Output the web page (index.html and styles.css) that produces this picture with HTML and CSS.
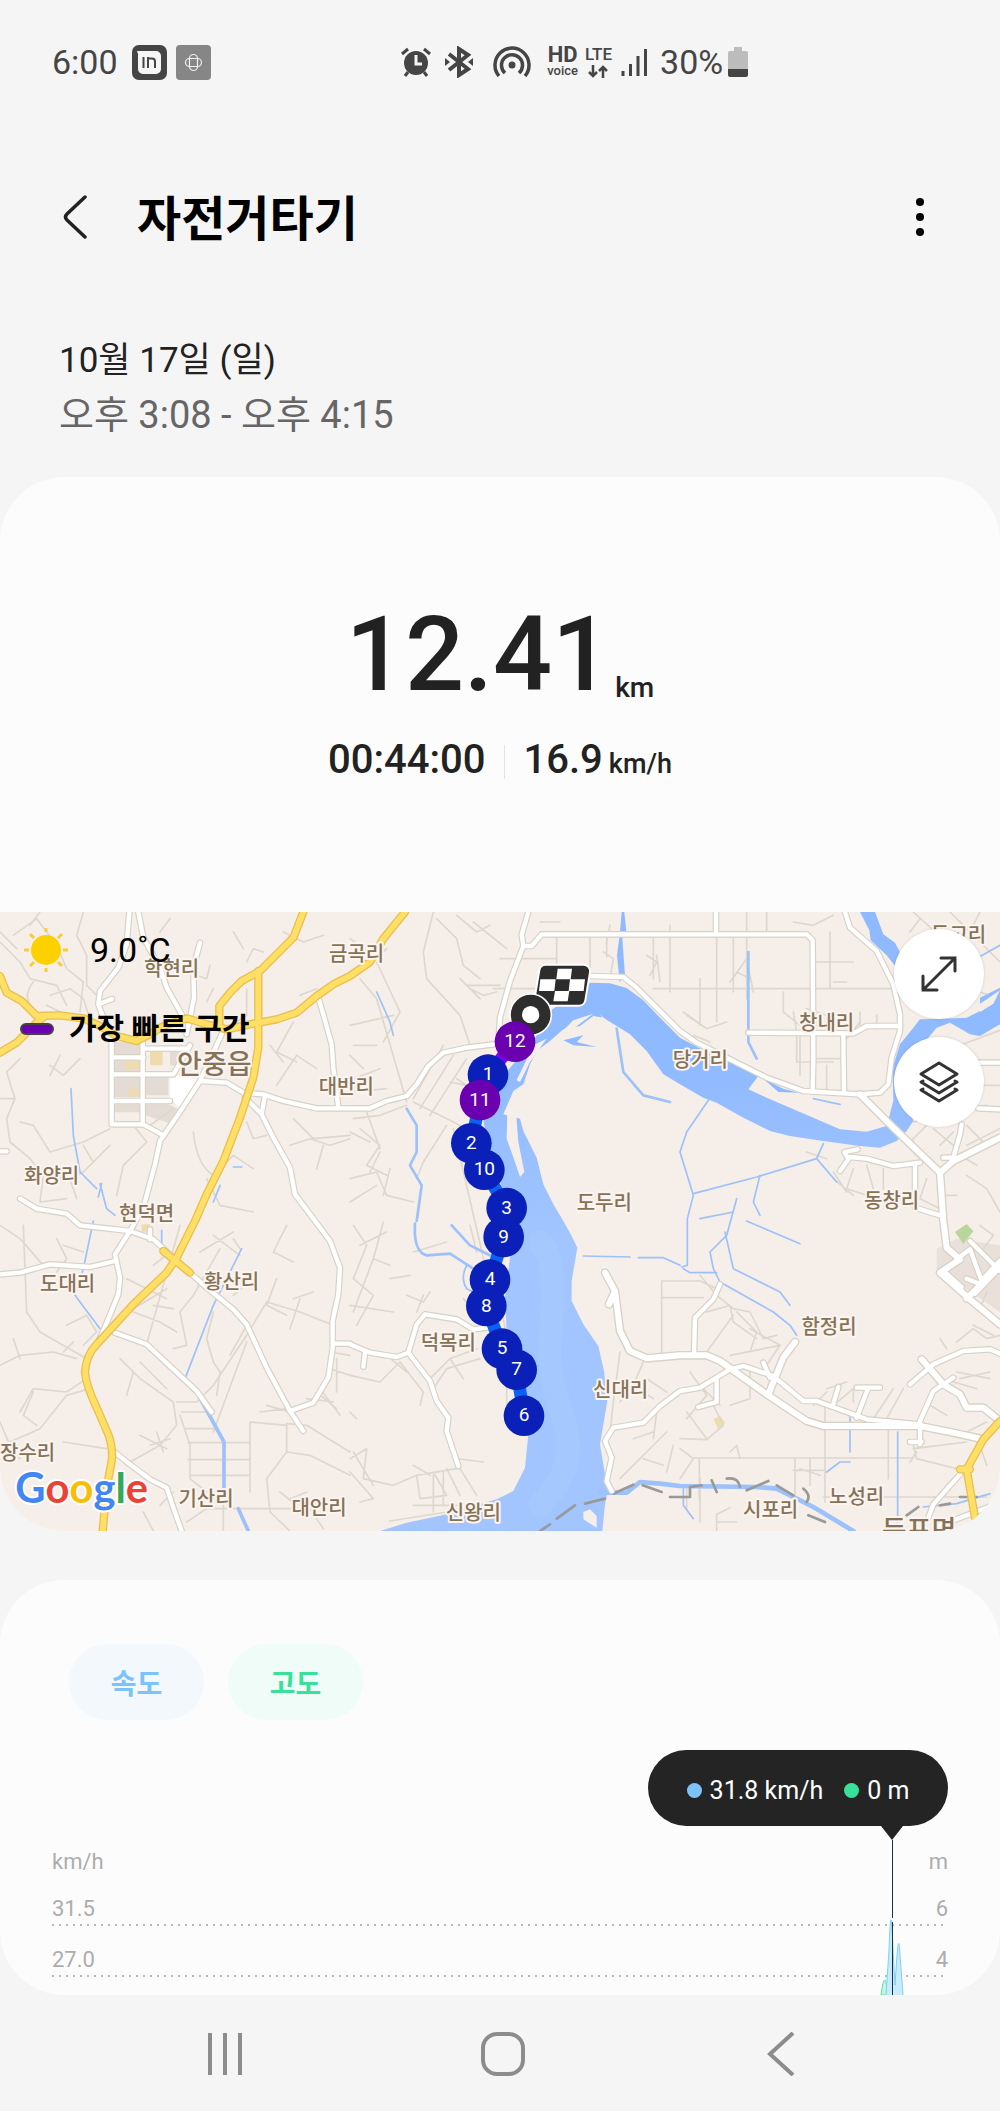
FILE: index.html
```
<!DOCTYPE html>
<html lang="ko">
<head>
  <meta charset="UTF-8"/>
  <meta name="viewport" content="width=device-width, initial-scale=1.0"/>
  <title>자전거타기</title>
  <link rel="stylesheet" href="styles.css">
</head>
<body>

  <!-- Status bar -->
  <div class="status-bar">
    <div class="status-left">
      <span>6:00</span>
      <svg width="35" height="35" viewBox="0 0 35 35">
        <rect width="35" height="35" rx="7" fill="#454545"/>
        <path d="M5 6h19a5 5 0 0 1 5 5v13a5 5 0 0 1-5 5H11a5 5 0 0 1-5-5V9z" fill="#f5f5f5"/>
        <path d="M11.500 12v11M16 23V12M16 13.500h4q3 0 3 3V23" fill="none" stroke="#454545" stroke-width="2"/>
      </svg>
      <svg width="35" height="35" viewBox="0 0 35 35">
        <rect width="35" height="35" rx="4" fill="#868686"/>
        <g fill="none" stroke="#f0f0f0" stroke-width="1.200">
          <rect x="13.500" y="9.500" width="8" height="16" rx="4"/>
          <rect x="9.500" y="13.500" width="16" height="8" rx="4"/>
        </g>
      </svg>
    </div>
    <div class="status-right">
      <!-- alarm -->
      <svg width="32" height="32" viewBox="0 0 32 32">
        <circle cx="16" cy="17" r="12" fill="#454545"/>
        <path d="M2 8l6-5M30 8l-6-5M8 26l-3 4M24 26l3 4" stroke="#454545" stroke-width="3"/>
        <path d="M16 9v9h6" fill="none" stroke="#f5f5f5" stroke-width="3"/>
      </svg>
      <!-- bluetooth -->
      <svg class="bluetooth" width="28" height="32" viewBox="0 0 28 32">
        <path d="M4 8l19 15-9 6V3l9 6L4 24" fill="none" stroke="#454545" stroke-width="4"/>
        <path d="M0 12l5 4-5 4zM28 12l-5 4 5 4z" fill="#454545"/>
      </svg>
      <!-- hotspot -->
      <svg class="hotspot" width="38" height="32" viewBox="0 0 38 32">
        <circle cx="19" cy="19" r="3.500" fill="#454545"/>
        <path d="M6 30a17 17 0 1 1 26 0M12 27a10.500 10.500 0 1 1 14 0" fill="none" stroke="#454545" stroke-width="3.500"/>
      </svg>
      <div class="stacked"><b>HD</b><small>voice</small></div>
      <div class="stacked lte">
        <b>LTE</b>
        <svg width="20" height="13" viewBox="0 0 20 13">
          <path d="M5 0v11M1 7l4 4 4-4M15 13V2M11 6l4-4 4 4" fill="none" stroke="#454545" stroke-width="2.500"/>
        </svg>
      </div>
      <svg width="27" height="28" viewBox="0 0 27 28">
        <path d="M2 23v5M9.500 16v12M17 8v20M24.500 1v27" stroke="#454545" stroke-width="3"/>
      </svg>
      <span class="percent">30%</span>
      <svg width="20" height="30" viewBox="0 0 20 30">
        <path d="M6 0h8v4h4a2 2 0 0 1 2 2v16H0V6a2 2 0 0 1 2-2h4z" fill="#bcbcbc"/>
        <path d="M0 22h20v6a2 2 0 0 1-2 2H2a2 2 0 0 1-2-2z" fill="#454545"/>
      </svg>
    </div>
  </div>

  <header class="app-header">
    <button class="icon-btn" aria-label="뒤로">
      <svg width="26" height="46" viewBox="0 0 26 46">
        <path d="M23 3L5 20q-3 3 0 6l18 17" fill="none" stroke="#222" stroke-width="3.500" stroke-linecap="round"/>
      </svg>
    </button>
    <h1>자전거타기</h1>
    <button class="icon-btn more" aria-label="더보기">
      <svg width="8" height="40" viewBox="0 0 8 40">
        <circle cx="4" cy="5" r="4"/><circle cx="4" cy="20" r="4"/><circle cx="4" cy="35" r="4"/>
      </svg>
    </button>
  </header>

  <div class="date">
    <div class="day">10월 17일 (일)</div>
    <div class="time">오후 3:08 - 오후 4:15</div>
  </div>

  <!-- Workout summary + map -->
  <section class="card">
    <div class="summary">
      <div class="distance">12.41<span class="unit">km</span></div>
      <div class="stats">
        <span>00:44:00</span>
        <span class="speed">16.9<span class="unit">km/h</span></span>
      </div>
    </div>

    <div class="map">
      <svg class="map-svg" viewBox="0 0 3000 1857" preserveAspectRatio="xMidYMid slice">
        <defs>
          <linearGradient id="river" gradientUnits="userSpaceOnUse" x1="0" y1="450" x2="0" y2="1000">
            <stop offset="0" stop-color="#90baff"/>
            <stop offset="1" stop-color="#a2c5ff"/>
          </linearGradient>
          <g id="white-roads">
            <path d="M388 0L380 97L355 167L300 237L295 277L310 317M300 275l36-14"/>
            <path d="M415 0L430 77L480 167L500 227L545 307"/>
            <path d="M600 92L580 167L582 257L560 367"/>
            <path d="M600 507L680 512L730 542L790 547L850 567L950 589L1110 589L1160 567L1220 552L1250 517L1285 462L1330 422L1400 407L1480 397"/>
            <path d="M735 557L785 607L820 677L870 767L885 847L940 920L990 987L1020 1067L1015 1147L998 1227L998 1307L985 1397L940 1472L870 1497M785 607l10-58"/>
            <path d="M955 257L970 307L995 397L1000 467L1015 587"/>
            <path d="M665 367L600 507L545 592L480 687L465 757L430 887L390 957L345 1027L360 1097L355 1147L310 1257L295 1290"/>
            <path d="M0 1087L60 1082L150 1057L270 1065L345 1047"/>
            <path d="M60 860L110 890L200 905L240 940L300 947L390 957L460 982L520 1037L620 1127L700 1192L740 1237L800 1367L870 1497L910 1557"/>
            <path d="M345 1262L440 1297L590 1437L635 1500M340 1617L390 1657L450 1702L500 1727L520 1787L545 1857"/>
            <path d="M0 718h20M335 390V637H430L490 670M428 380V637M340 436H430M340 487H520M335 567H510M430 410H560M570 400L520 487M450 982v-30"/>
            <path d="M1585 0L1565 67L1570 102L1530 207L1500 317L1495 397"/>
            <path d="M1570 102L1595 102L1625 67H2420L2438 85L2440 437L2438 537M2148 0V62"/>
            <path d="M1770 192L1870 195L1910 227L2040 357L2090 392L2190 442L2300 497L2410 537L2580 547L2640 542L2665 517L2675 437L2700 357L2700 307L2680 217L2630 117L2550 47L2535 0"/>
            <path d="M2245 362L2560 364L2600 342L2700 342M2530 367L2532 537M2940 452H3000M2935 589L3000 592"/>
            <path d="M2520 777L2550 735L2600 740L2680 762L2760 752M2545 740l-12-20 40-8M2745 757V887L2820 910M2885 637L2880 667L2860 737H2830"/>
            <path d="M1050 1297L1110 1322L1190 1335L1225 1322L1250 1237L1275 1207L1370 1222L1420 1252L1460 1247M1225 1322L1290 1407L1310 1467L1345 1517L1340 1557L1375 1662M1095 1322l-5 42M998 1295h52"/>
            <path d="M2040 1437L1980 1482L1930 1532L1840 1547L1815 1587L1835 1637L1820 1707L1835 1737M2040 1437L2100 1427L2190 1372L2230 1362L2320 1392L2410 1467L2450 1467L2600 1522L2760 1537"/>
            <path d="M2160 1117L2140 1162L2085 1217L2082 1327M2290 1352l20 45M2150 1400v70l-55 15"/>
            <path d="M2730 1417L2800 1357L2890 1317L2970 1312L3000 1325M2860 1397L2800 1437L2760 1527L2760 1597M2730 1590h35M2640 1427H2570M2605 1427L2570 1517M2515 1425l-15 50"/>
            <path d="M2785 1817L2800 1777L2880 1687M2820 1840L3000 1772"/>
            <path d="M2910 987L3000 1077M2950 1100L3000 1045M2925 1145L3000 1067M2870 1042L2910 1012L2950 1120L2900 1100M2840 1085l45 40"/>
          </g>
          <g id="main-roads">
            <path d="M2580 547L2680 647L2820 782L2830 927L2840 1007L2880 1042M2820 782L2860 747L3000 677"/>
            <path d="M2880 1042L2820 1082L2910 1162L3000 1237M2900 1160L3000 1060"/>
            <path d="M1815 1082L1845 1137L1860 1257L1890 1317L1940 1339L2040 1330L2120 1330L2160 1347L2300 1447L2420 1527L2470 1542L2760 1542L2860 1562L2950 1582M1845 1137l-18 40"/>
            <path d="M2385 1290L2350 1337L2305 1447M2765 1342L2830 1417L2880 1447L2900 1487L2950 1487L3000 1527"/>
          </g>
          <g id="yellow-roads">
            <path d="M0 192L20 242L65 267L110 312L180 310L250 319L300 342L350 372L410 387L450 367L490 342L560 319L620 337L680 352L760 335L830 322L890 302L950 252L1000 217L1050 192L1110 150L1150 80L1215 0"/>
            <path d="M0 422L50 392L110 332L135 312"/>
            <path d="M910 0L880 77L830 127L780 177L725 207L690 242L658 282L658 337"/>
            <path d="M775 177V407L760 497L720 617L670 747L620 847L585 927L530 1037L500 1082L400 1177L290 1297Q258 1330 255 1380Q258 1420 290 1487L325 1567Q340 1610 335 1647L320 1727L308 1857"/>
            <path d="M490 1017L570 1082M3000 1527L2950 1582L2900 1672L2925 1817M2880 1672h30"/>
          </g>
        </defs>

        <rect width="3000" height="1857" fill="#f6eee8"/>

        <!-- built-up areas -->
        <path d="M345 390h75v40h-75zM345 445h75v35h-75zM345 495h75v60h-75zM437 495h68v55h-68zM437 570l55 0 50 25-30 40-75-25zM345 573h75v28h-75zM510 410l50-10-20 60h-30z" fill="#e4dcd4"/>
        <path d="M450 415h38v45h-38zM375 450h45v22h-45zM385 530h35v22h-35zM425 937h25v22h-25zM2140 1520l20-8 15 20-20 20z" fill="#efdcae"/>
        <path d="M510 487L600 505L545 592L510 560z" fill="#fff"/>
        <path d="M2810 1010l60-30 130 20v200l-190-130z" fill="#e9e0d9"/>
        <path d="M2865 960l35-24 20 22-30 38z" fill="#b8d59a"/>

        <!-- lanes -->
        <g class="lanes">
          <path d="M40 70L110 20L170 100L200 170L250 210L240 300M0 90L60 150L90 200L170 220L200 280M100 210Q60 260 110 300M150 250L210 230L250 260L270 320M140 280l60 30M250 0l-20 70 30 60v90l40 40M120 0l-30 40M0 60L50 110"/>
          <path d="M60 440L20 480L45 560L20 620L30 690L90 740L130 790L210 800L250 780L330 700M240 440L190 490L150 460M180 430l-30 60M330 650L250 690L150 720L100 640L60 630M130 790L120 870L200 860M400 640L440 690L370 760L350 850M210 800l20 60M0 560l45 0M250 700l30 50"/>
          <path d="M450 640L520 590M580 660Q590 760 640 790L700 730L760 770M620 800L660 880L760 900M740 150l20-40 30 10M740 230v80l-60 40M880 330l-50 90 60 30M810 400l40 50M830 520l60-90 60 40M900 250l50-20M850 60l60 30 60-20M700 60l30 50M880 620l60 60 110-10M870 700l60-20 60 20 60-20M970 700l-20 70M740 630l20 50 40-10M560 180l60 20 10-40M640 230l-20 40M480 60l30-40"/>
          <path d="M0 940L60 980L130 1060M70 940L80 1200L120 1260L260 1340M170 980l30 60-30 40M190 1000l60 20M0 1360L60 1330L160 1320L230 1340M60 1340l-20-60M200 1240l60-30 30 50-40 40M60 1500L100 1430L200 1440L260 1400M0 1530L30 1600L60 1640M30 1590L120 1550L200 1450M190 1590l130 20M270 1430l-70 20M190 1320l30-30M100 1440L70 1510L110 1540"/>
          <path d="M360 1340L420 1400L520 1470L530 1540L480 1600L390 1650M400 1380L380 1450M420 1350l80 80M530 1470L590 1470L640 1420L740 1270L800 1170L900 1200L1000 1240M540 1510L570 1600V1700L620 1740M545 1500H640M555 1550H655M565 1592H750M565 1643H750M570 1690H745M750 1530V1740M750 1530L860 1540V1620L800 1700L810 1800L870 1857M860 1620L930 1630L1050 1690M860 1535L920 1540L1050 1620M420 1570l80 40M450 1600l60-20M470 1560l20 60"/>
          <path d="M660 1010L580 1150L540 1200L560 1300L520 1310M600 1020L700 960M640 970l80 60M700 980l20 30M860 940l-40 80 60 30M830 1100l-30 80 60 30M640 1200L620 1280L640 1350L660 1380L650 1450M740 1240L690 1330M740 1290L640 1560M540 940L440 1297M460 1060l50-40M380 1100l120 60M400 1200l80 30 50 30M460 1180l60 10M400 1190l100-60M700 1150l70-60M870 1250l30-90M880 1160l60-20M990 1320l60 10M990 1370l60 20M1010 1340v100M800 1480l70 20M780 1500l80-10M920 1460l80 10M950 1440l60 50"/>
          <path d="M1050 80L1130 140L1160 110M1130 150L1200 300L1150 390M1080 200L1130 260L1220 570M1050 340L1180 310M1300 0L1270 120L1280 200L1380 310L1410 400M1310 20L1370 80L1390 160L1440 200M1400 220h100M1410 230l40 20 40-10M1380 200l60 60M1420 30l100 80M1370 10l60 50 40-20M1050 430L1090 470M1060 400L1130 400M1060 500l80-30M1060 540l100-10"/>
          <path d="M1240 560L1330 400M1260 590L1360 430M1290 610L1400 440M1240 570L1420 660M1340 640L1270 750L1250 800M1360 650L1460 1080M1060 620L1140 610L1220 580M1080 650l60 50-40 60 60 30M1100 600l40 110M1050 660l60 30M1050 800L1130 780L1160 850L1240 870M1050 870l80-50M1140 720l-30 60M1370 500l30 20M1350 510l50 10M1170 770l-20 80"/>
          <path d="M1480 230h200M1500 140h170M1670 70V230M1770 75V190M1960 75V200M2010 40V240M1820 75v60M1960 230H2680M2150 70V330M2240 0V260M2440 150H2560M2490 60V230M1940 130l30 20-20 40M1970 130l10 80M2300 0v70M2380 30l60 10 60-30M2500 210h40M1810 120l30 20-10 60M1680 30h-60M1830 40l-10 50"/>
          <path d="M2200 60V240M2190 210L2240 140L2260 240M2210 180l40 20M2050 300L2120 350L2180 330M2100 200V340M2060 310l60 40M2080 370l50 20M2390 360V450L2500 450M2380 300l10 60M2420 290l60 20M2580 300v60M2630 310v40M2440 440H2530M2480 460v70M2540 380l40-50M2350 240v60l50 40M2400 370v120M2850 0L3000 150M2740 0L2850 100M2940 0l-20 40M3000 260l-60-20M2880 400L3000 355M2940 520H3000M2760 20l-30 40"/>
          <path d="M2780 640L2720 700L2760 740M2800 650L2860 700M2900 700L3000 650M2790 600L2960 580M2820 700l40-40M2900 640l60 60M2880 730l50 30M2900 790L2960 830L3000 900M2830 850h40M2780 800l-20 60 60 30M2740 630l80-20M2560 770L2540 830L2600 850M2500 800L2560 850M2480 740l-60-20M2540 840l-40-60M2600 760l20 70M2650 770v60"/>
          <path d="M2040 1107H2100L2150 1130M2040 1157H2110M1985 1107V1330M1985 1107h60M1985 1157h60M2100 1090L2150 1150L2200 1190L2250 1200L2290 1280L2330 1270M2120 1200L2190 1180L2200 1230L2270 1280M2200 1210L2120 1320M2210 1200l60 60-20 60M2250 1250l90 50-40 60M2190 1330L2340 1300M2070 1380L2120 1450L2060 1520M2100 1420l60 60M2040 1580L2120 1583L2170 1540L2140 1480M2060 1500l60 80M2040 1610l40 30-40 60M2080 1638H2740M2098 1640v120M2190 1620l20-20 10 40M2250 1360v100l-60 20"/>
          <path d="M2475 1480V1770M2385 1640V1750M2430 1640v80M2380 1675H2470M2665 1540V1700M2470 1755H2960M2740 1600l10 40 160 40M2740 1610L2900 1590M2750 1620l-20 30M2660 1520L2710 1430M2480 1430l60-20M2500 1480l60-50M2620 1520l60-90M2560 1430v40M2440 1480l40-40M2400 1670l60 20M2800 1450l-10 30 50 30M2880 1400l90-20M2870 1380l100 20M2860 1410l70 20M2900 1560l60-30M2960 1660l-20-60M2870 1290l50-40 40 30 40-10M2840 1310l-20-30M2920 1240l60 30M2940 940l40 30-30 40M2960 1140l-20 50"/>
          <path d="M1060 940L1100 1000L1060 1100L1120 1150L1070 1240M1150 930L1120 1040L1060 1200M1080 1000L1160 960M1050 1180L1180 1200M1120 1040l50 20M1220 1150l50 20 20-30M1270 1150l-20 50M1390 1160l40 40M1430 1310L1350 1340L1290 1400M1440 1340l-100 30-40 60M1350 1340l40 60M1050 1390L1140 1410L1200 1350M1200 1350l70 90-10 40M1160 1330l60 50M1050 1500l20 20"/>
          <path d="M1050 1640L1100 1610L1090 1700L1180 1720L1250 1690L1370 1670M1050 1680L1120 1760L1080 1770M1060 1620l60 100M1250 1690L1260 1760L1340 1750M1300 1680L1340 1750M1340 1670L1380 1750M1380 1670L1430 1750M1370 1640l80 10M1240 1660l50 30M1240 1780H1380M1300 1690v110M1330 1680v100M1170 1827L1340 1800M960 1430l60 80M1860 1320L1840 1470L1830 1560M1930 1350L1900 1420L1960 1460M1940 1400l60 40M1890 1430l-30 40M1970 1500L1960 1580M2000 1560L1920 1640L1860 1700M1930 1640l60 20M2020 1600l-20 80M1900 1580l60-20M2100 1830V1700M2150 1857v-50l40-20M2060 1730v60M2150 1830h60"/>
          <path d="M1520 1260v230M1510 1220l10 60M1170 1100l60-10M1240 1020L1340 990M1410 940l20 80M930 1790l40 60M700 1790H930M670 1640v217M560 1830l60-40h60M430 1800l30 57M520 1740l-40 40M870 1760l50-20M890 1780l-50-40"/>
        </g>

        <!-- water -->
        <g fill="#90baff">
          <path fill="url(#river)" d="M1770 212L1830 214L1880 228L1930 265L1975 312L2040 377L2115 417L2250 477L2275 492L2245 532L2300 557L2370 587L2440 617L2520 652L2600 659L2660 642L2680 567L2678 467L2700 397L2740 347L2760 322L2830 320L2900 317L2940 297V257L3000 227V337L2940 372L2910 367L2850 332L2810 347L2760 407L2730 447L2720 567L2740 627L2720 657L2690 687L2640 707L2580 702L2470 687L2370 672L2310 657L2230 617L2150 572L2110 557L2040 517L1990 487L1940 417L1890 367L1810 317L1780 312L1740 342L1690 352L1650 387L1610 417L1590 457L1570 517L1540 537L1510 607L1560 620L1570 657L1610 737L1630 817L1660 877L1690 927L1715 972L1732 1007L1715 1107V1167L1750 1237L1795 1302L1812 1377L1822 1467L1800 1597L1815 1687L1825 1727L1815 1777L1807 1857H1140L1220 1832L1340 1807L1490 1762L1540 1737L1575 1667L1585 1567L1570 1487L1550 1377L1520 1257L1515 1157L1530 1037L1550 957L1560 927L1510 837L1470 727L1450 627L1490 527L1530 467L1600 387L1650 297z"/>
          <path d="M2580 0L2625 0L2650 67L2685 92L2720 160L2760 260L2700 180L2660 130L2612 85L2608 55z"/>
          <path d="M1865 0h8l6 60-12 20 8 110-16 20-8-80 8-60z"/>
          <path d="M2290 500l60 30 45 12-60-2zM1690 385l60-15-20 20 60 15-70-5z"/>
        </g>
        <path d="M1620 990Q1650 1020 1655 1100T1650 1280T1690 1520T1620 1780" fill="none" stroke="#adcdff" stroke-width="70" stroke-linecap="round" opacity=".35"/>
        <path d="M1522 590L1548 600L1555 690L1573 780L1560 795L1545 750L1520 680zM1720 325l60-20-80 60-40 20zM1800 305L1840 350L1900 400L1940 430L1960 460L1900 420L1850 390zM1600 400l40-20-50 70-30 60-10-5zM1750 1800l20-8 20 20v35l-40-25zM2940 275l60-40-20 40-40 25z" fill="#f6eee8"/>

        <g class="streams">
          <path d="M213 530L220 670L240 780L290 830M300 815L320 890L345 910M305 815l-10 40M280 927L250 1070L225 1150L300 1250M725 1010L640 1180L555 1400M1130 240L1170 330L1180 370"/>
          <path d="M350 1270L435 1300L585 1440M1220 590L1250 640V720L1230 760L1265 820L1250 927M1245 935Q1240 1020 1280 1030L1350 1025L1420 1070L1490 1090M1355 940L1410 1000L1480 1035M1850 350L1870 480L1930 550L2010 570M2245 120V390L2270 440" stroke-width="8"/>
          <path d="M590 1440L672 1590V1727M715 1790L745 1857" stroke-width="11"/>
          <path d="M2125 565L2060 660L2040 720L2080 850L2062 920V1060L2045 1065M2080 845L2270 795L2450 740L2470 695M2450 740L2510 810M2280 790L2260 870L2280 910M2100 920l100-20M2210 860L2180 970L2130 1020L2140 1070L2160 1110L2320 1200L2370 1240L2390 1270M2175 960L2200 1070L2340 1140L2370 1180M2240 927L2340 970L2400 995M2050 1070l20 12h80M1750 1032L1890 1035M1915 1037L1990 1037L2040 1060"/>
          <path d="M1800 1742L1880 1742L1920 1710L1980 1715L2040 1722L2270 1725L2330 1730L2440 1785L2560 1857" stroke-width="14"/>
          <path d="M2550 1515v105M2693 1560v270M2480 1680l40-30h30M2770 1785l100-10 100-30M2920 145L3000 100M2050 1730v50l30 40M1400 1060q-20 40 0 70l20 10"/>
          <path d="M2440 560L2520 577M640 870l20-50M700 765h25M485 955v45"/>
        </g>
        <path class="rail" d="M1620 1857L1650 1837M1670 1820L1725 1780M1755 1775L1815 1760M1840 1745L1900 1718M1928 1720L1985 1740M2010 1755h60v-30l35-5M2150 1740l-15-35M2180 1700q35-5 40 25M2240 1735l65-28M2330 1720l50 30M2410 1730q25 20 10 40M2425 1810l50 20M2720 1810l35-25M2820 1780l30-5M2880 1755h50"/>

        <use href="#white-roads" class="white-casing"/>
        <use href="#main-roads" class="main-casing"/>
        <use href="#white-roads" class="white-fill"/>
        <use href="#main-roads" class="main-fill"/>
        <use href="#yellow-roads" class="yellow-casing"/>
        <use href="#yellow-roads" class="yellow-fill"/>

        <!-- place names -->
        <g class="places" transform="translate(0 21)">
          <text x="515" y="170">학현리</text>
          <text x="1070" y="125">금곡리</text>
          <text x="1039" y="525">대반리</text>
          <text x="155" y="792">화양리</text>
          <text x="440" y="907">현덕면</text>
          <text x="1813" y="874">도두리</text>
          <text x="2101" y="444">당거리</text>
          <text x="2480" y="334">창내리</text>
          <text x="2675" y="867">동창리</text>
          <text x="2876" y="70">동고리</text>
          <text x="203" y="1115">도대리</text>
          <text x="695" y="1109">황산리</text>
          <text x="83" y="1622">장수리</text>
          <text x="618" y="1762">기산리</text>
          <text x="957" y="1787">대안리</text>
          <text x="1345" y="1292">덕목리</text>
          <text x="1862" y="1435">신대리</text>
          <text x="1420" y="1802">신왕리</text>
          <text x="2487" y="1245">함정리</text>
          <text x="2570" y="1754">노성리</text>
          <text x="2312" y="1794">시포리</text>
          <text class="town" x="643" y="464">안중읍</text>
          <text class="town" x="2757" y="1864">둔포면</text>
        </g>

        <!-- route -->
        <g fill="none" stroke-width="38">
          <path stroke="#0a62f5" d="M1440 564L1414 694L1453 773L1520 888L1511 975L1470 1103L1459 1182L1506 1310L1550 1373L1572 1511"/>
          <path stroke="#8000ff" d="M1592 308L1545 389L1464 488L1440 564"/>
        </g>
        <path d="M1638 158h112a20 20 0 0 1 20 23l-14 84a20 20 0 0 1-20 16h-112a20 20 0 0 1-20-23l14-84a20 20 0 0 1 20-16z" fill="#2d2d2d" stroke="#fff" stroke-width="6"/>
        <path d="M1673 170h43l-4 32h43l-4 35h-43l-5 31h-43l5-31h-48l4-35h48zM1667 202l-4 35h43l4-35z" fill="#fff" fill-rule="evenodd"/>
        <circle cx="1592" cy="308" r="62" fill="#2d2d2d" stroke="#fff" stroke-width="5"/>
        <circle cx="1592" cy="308" r="26" fill="#fff"/>

        <g class="marks">
          <circle class="fast" cx="1545" cy="389" r="61"/><text x="1545" y="406">12</text>
          <circle cx="1464" cy="488" r="61"/><text x="1464" y="505">1</text>
          <circle class="fast" cx="1440" cy="564" r="61"/><text x="1440" y="581">11</text>
          <circle cx="1414" cy="694" r="61"/><text x="1414" y="711">2</text>
          <circle cx="1453" cy="773" r="61"/><text x="1453" y="790">10</text>
          <circle cx="1520" cy="888" r="61"/><text x="1520" y="905">3</text>
          <circle cx="1511" cy="975" r="61"/><text x="1511" y="992">9</text>
          <circle cx="1470" cy="1103" r="61"/><text x="1470" y="1120">4</text>
          <circle cx="1459" cy="1182" r="61"/><text x="1459" y="1199">8</text>
          <circle cx="1506" cy="1310" r="61"/><text x="1506" y="1327">5</text>
          <circle cx="1550" cy="1373" r="61"/><text x="1550" y="1390">7</text>
          <circle cx="1572" cy="1511" r="61"/><text x="1572" y="1528">6</text>
        </g>

        <text class="google" x="46" y="1772"><tspan fill="#4285f4">G</tspan><tspan fill="#ea4335">o</tspan><tspan fill="#fbbc05">o</tspan><tspan fill="#4285f4">g</tspan><tspan fill="#34a853">l</tspan><tspan fill="#ea4335">e</tspan></text>
      </svg>

      <div class="map-info">
        <div class="weather">
          <svg width="46" height="46" viewBox="0 0 46 46">
            <circle cx="23" cy="23" r="15" fill="#fdd000"/>
            <path d="M23 1v4M23 41v4M1 23h5M40 23h5M7 7l4 4M35 35l4 4M7 39l4-4M35 11l4-4" stroke="#f5cd3a" stroke-width="3"/>
          </svg>
          <span>9.0˚C</span>
        </div>
        <div class="legend"><i></i>가장 빠른 구간</div>
      </div>

      <div class="map-buttons">
        <button aria-label="지도 확대">
          <svg width="38" height="38" viewBox="0 0 38 38">
            <path d="M3 35L35 3M21 3h14v13M3 21v14h14" fill="none" stroke="#333" stroke-width="3" stroke-linecap="round"/>
          </svg>
        </button>
        <button aria-label="지도 유형">
          <svg width="42" height="42" viewBox="0 0 42 42">
            <g fill="none" stroke="#333" stroke-width="3" stroke-linejoin="round" stroke-linecap="round">
              <path d="M21 2l18 11-18 11L3 13z"/>
              <path d="M5 20l-2 1 18 11 18-11-2-1M5 28l-2 1 18 11 18-11-2-1"/>
            </g>
          </svg>
        </button>
      </div>
    </div>
  </section>

  <!-- Speed / elevation chart -->
  <section class="card chart-card">
    <div class="chips">
      <button class="chip speed-chip">속도</button>
      <button class="chip height-chip">고도</button>
    </div>
    <div class="chart">
      <div class="axis"><span>km/h</span><span>m</span></div>
      <div class="axis line"><span>31.5</span><span>6</span></div>
      <div class="axis line"><span>27.0</span><span>4</span></div>
      <svg class="spikes" width="24" height="155" viewBox="0 0 24 155">
        <path d="M1 155Q5 125 8 155z" fill="#c4f5dd" stroke="#5ee0a5"/>
        <path d="M6 155L9 110Q11 50 13 110L15 145L17 115Q19 92 20 115L23 155" fill="#c9ecfc" stroke="#7fd0f5"/>
        <path d="M12.500 0V78M12.500 82V155" stroke="#1c2f3c" stroke-width="1"/>
      </svg>
      <div class="tooltip">
        <i class="dot blue"></i>31.8 km/h
        <i class="dot green"></i>0 m
      </div>
    </div>
  </section>

  <nav class="nav-bar">
    <button aria-label="최근 앱">
      <svg width="36" height="44" viewBox="0 0 36 44"><path d="M3 1v42M18 1v42M33 1v42" stroke="#8c8c8c" stroke-width="4"/></svg>
    </button>
    <button aria-label="홈">
      <svg width="44" height="44" viewBox="0 0 44 44"><rect x="2" y="2" width="40" height="40" rx="14" fill="none" stroke="#8c8c8c" stroke-width="4"/></svg>
    </button>
    <button aria-label="이전">
      <svg width="28" height="44" viewBox="0 0 28 44"><path d="M26 1L3 22l23 21" fill="none" stroke="#8c8c8c" stroke-width="4"/></svg>
    </button>
  </nav>

</body>
</html>
```
FILE: styles.css
```
body {
  margin: 0;
  font-family: Roboto, "Noto Sans CJK KR", sans-serif;
  background: #f5f5f5;
  color: #222;
}

button {
  border: none;
  padding: 0;
  background: none;
  font-family: inherit;
  cursor: pointer;
}

svg {
  display: block;
}

/* Status bar */
.status-bar {
  display: flex;
  align-items: center;
  height: 124px;
  padding-left: 52px;
  font-size: 34px;
  color: #454545;
}

.status-left, .status-right {
  display: flex;
  align-items: center;
}

.status-left {
  gap: 9px;
}

.status-left span {
  margin-right: 5px;
}

.status-right {
  margin-left: 20%;
}

.bluetooth {
  margin-left: 13px;
}

.hotspot {
  margin: 0 16px 0 20px;
}

.stacked {
  display: flex;
  flex-direction: column;
  align-items: center;
  font-weight: 500;
}

.stacked b {
  font-size: 22px;
  line-height: 17px;
}

.stacked small {
  font-size: 13px;
  line-height: 15px;
}

.lte {
  margin: 0 9px 0 7px;
  gap: 3px;
}

.lte b {
  font-size: 17px;
  line-height: 15px;
  font-weight: 500;
}

.percent {
  margin: 0 5px 0 12px;
}

/* Header */
.app-header {
  display: flex;
  align-items: center;
  height: 186px;
  padding: 0 76px 0 62px;
}

.app-header h1 {
  flex: 1;
  margin: 0 0 5px 49px;
  font-size: 48px;
  font-weight: 700;
  color: #000;
}

.date {
  padding: 24px 59px 35px;
  line-height: 54px;
}

.day {
  font-size: 35px;
}

.time {
  font-size: 38px;
  color: #666;
}

/* Cards */
.card {
  border-radius: 64px;
  background: #fcfcfc;
  overflow: hidden;
}

.summary {
  padding: 128px 0 124px;
  text-align: center;
}

.distance {
  display: flex;
  justify-content: center;
  align-items: flex-end;
  font-size: 104px;
  line-height: 100px;
  font-weight: 500;
}

.distance .unit {
  margin-left: 4px;
  line-height: 34px;
}

.unit {
  font-size: 28px;
  font-weight: 500;
}

.stats {
  display: flex;
  justify-content: center;
  margin-top: 31px;
  font-size: 40px;
  line-height: 48px;
  font-weight: 500;
}

.speed {
  margin-left: 18px;
  padding-left: 20px;
  background: linear-gradient(#e4e4e4, #e4e4e4) left center / 1px 34px no-repeat;
}

.speed .unit {
  margin-left: 6px;
  font-size: 27px;
}

/* Map */
.map {
  position: relative;
  aspect-ratio: 1000 / 619;
}

.map-svg {
  width: 100%;
  height: 100%;
}

.map-svg use, .lanes, .streams, .rail {
  fill: none;
  stroke-linejoin: round;
  stroke-linecap: round;
}

.lanes {
  stroke: #ddd8ce;
  stroke-width: 5;
}

.streams {
  stroke: #9cc1fb;
  stroke-width: 5;
}

.rail {
  stroke: #999;
  stroke-width: 8;
}

.white-casing { stroke: #d6d2c6; stroke-width: 20; }
.white-fill { stroke: #fff; stroke-width: 13; }
.main-casing { stroke: #d6d2c6; stroke-width: 26; }
.main-fill { stroke: #fff; stroke-width: 18; }
.yellow-casing { stroke: #e8c050; stroke-width: 25; }
.yellow-fill { stroke: #ffdf66; stroke-width: 17; }

.places text {
  font-family: "Noto Sans CJK KR", sans-serif;
  font-size: 60px;
  font-weight: 500;
  text-anchor: middle;
  fill: #857357;
  stroke: #fbf4f0;
  stroke-width: 12;
  stroke-linejoin: round;
  paint-order: stroke;
}

.places .town {
  font-size: 81px;
}

.marks circle {
  fill: #0a20b8;
}

.marks .fast {
  fill: #6a00b0;
}

.marks text {
  font-size: 57px;
  text-anchor: middle;
  fill: #fff;
}

.google {
  font-family: Lato, sans-serif;
  font-size: 125px;
  font-weight: 700;
  stroke: #fff;
  stroke-width: 12;
  stroke-linejoin: round;
  paint-order: stroke;
}

.map-info {
  position: absolute;
  top: 15px;
  left: 20px;
  color: #000;
}

.weather {
  display: flex;
  align-items: center;
  gap: 21px;
  margin-left: 3px;
  height: 46px;
  font-size: 34px;
}

.legend {
  display: flex;
  align-items: center;
  gap: 15px;
  margin-top: 34px;
  font-size: 30px;
  line-height: 44px;
  font-weight: 700;
}

.legend i {
  width: 30px;
  height: 8px;
  border: 2px solid #444;
  border-radius: 6px;
  background: #6a00b0;
}

.map-buttons {
  position: absolute;
  top: 17px;
  right: 16px;
  display: flex;
  flex-direction: column;
  gap: 18px;
}

.map-buttons button {
  display: flex;
  align-items: center;
  justify-content: center;
  width: 90px;
  height: 90px;
  border-radius: 50%;
  background: #fff;
  box-shadow: 0 0 3px rgba(0,0,0,0.15);
}

/* Chart */
.chart-card {
  margin-top: 49px;
  padding: 64px 52px 18px;
}

.chips {
  display: flex;
  gap: 24px;
  margin-left: 17px;
}

.chip {
  width: 135px;
  height: 76px;
  border-radius: 38px;
  font-size: 28px;
  font-weight: 700;
}

.speed-chip {
  background: #f3f8fc;
  color: #7bc3fa;
}

.height-chip {
  background: #f0fcf8;
  color: #38e09a;
}

.chart {
  position: relative;
  padding-top: 128px;
}

.axis {
  display: flex;
  justify-content: space-between;
  font-size: 22px;
  line-height: 27px;
  color: #adadad;
}

.axis.line {
  height: 51px;
  line-height: 68px;
  background: repeating-linear-gradient(90deg, #b8b8b8 0 2px, transparent 2px 7px) bottom / 100% 2px no-repeat;
}

.spikes {
  position: absolute;
  right: 44px;
  bottom: -18px;
}

.tooltip {
  position: absolute;
  top: 30px;
  right: 0;
  display: flex;
  align-items: center;
  justify-content: center;
  box-sizing: border-box;
  width: 300px;
  height: 76px;
  border-radius: 38px;
  padding-top: 4px;
  background: #242424;
  color: #fff;
  font-size: 25px;
}

.tooltip::after {
  content: "";
  position: absolute;
  top: 100%;
  right: 45px;
  border: 11px solid transparent;
  border-top: 14px solid #242424;
  border-bottom: none;
}

.dot {
  width: 15px;
  height: 15px;
  margin-right: 8px;
  border-radius: 50%;
}

.blue {
  background: #7bc3fa;
}

.green {
  margin-left: 21px;
  background: #38e09a;
}

/* Android navigation */
.nav-bar {
  display: grid;
  grid-template-columns: repeat(3, 1fr);
  padding: 0 80px 0 86px;
  height: 117px;
}

.nav-bar button {
  display: flex;
  align-items: center;
  justify-content: center;
}
```
